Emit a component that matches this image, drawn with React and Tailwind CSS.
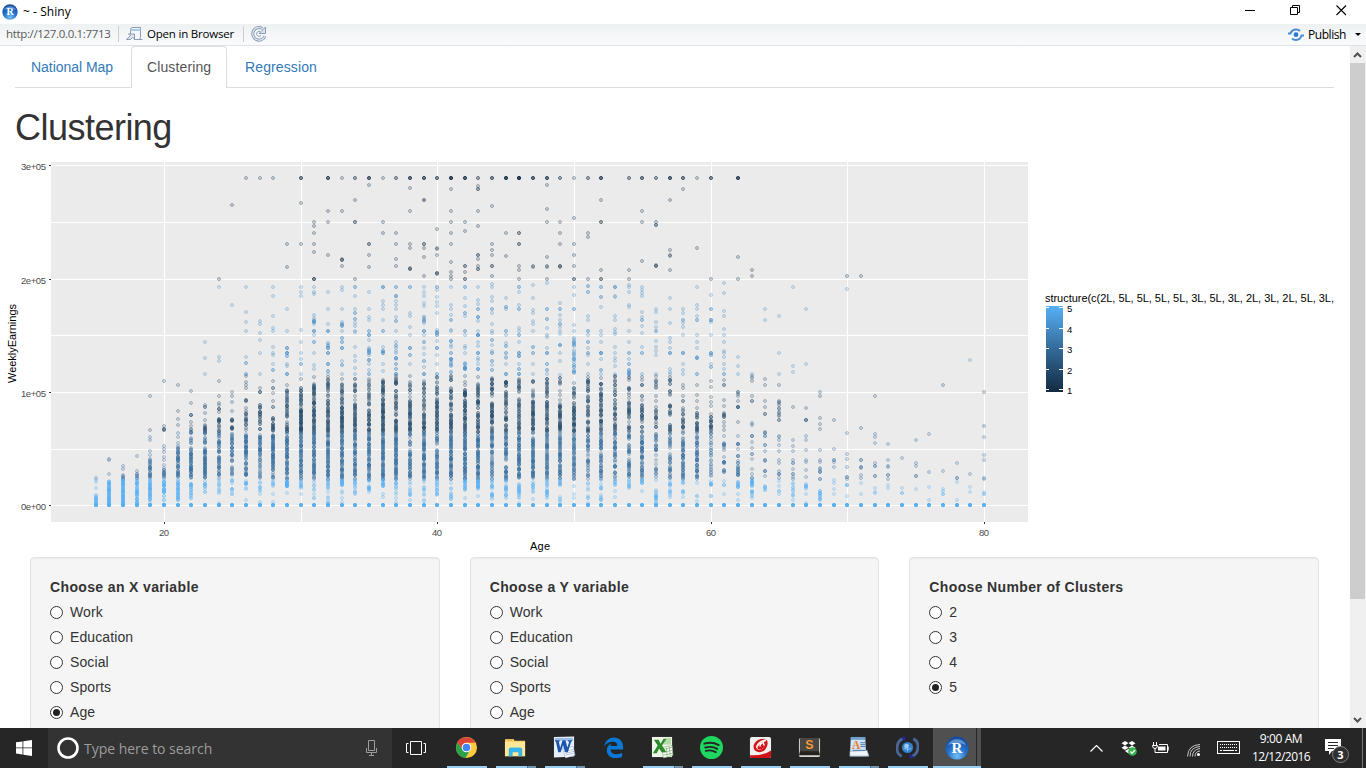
import React from "react";

const UI = "font-['Open_Sans','Noto_Sans',sans-serif]";

/* Scatter columns keyed by age. Tokens: "y", "yxCount" or "from-to@count". */
const COLUMNS = {
  15: "478 480 482 488 495-505@16",
  16: "459 460 474 481-505@50",
  17: "466 469 474-479@6 480-505@55",
  18: "456 471 474x2 476x2 478x2 480-505@38",
  19: "396 430 437 440 451 455 459-478@24 480-500@34 503",
  20: "381 426 429x2 430x2 446 449 452 457 460 465 468 470-478@12 480-492@22 492-505@8",
  21: "385 411 419 425 433 437 443 446 448-478@40 480-500@30",
  22: "391 403 415x3 422 426 428-443@12 448-478@45 481-498@18",
  23: "342 358 374 405 407x2 413 420 425-433@14 434-448@10 449-478@50 480-493@11",
  24: "279 287 357 361 381 396 403 405 409x3 412 419-422@9 425-433@8 434-478@48 480-495@9 503",
  25: "305 205 392 396 402 411 419-421@6 426-429@7 434-455@26 455-479@15 480-494@10",
  26: "178 287 312 322 331 357 363x2 374x2 376 382 385 388 400-402@4 408 413 411-430@16 434-453@32 453-478@26 480-490@9 500",
  27: "178 321 324 333 340 353 374 388 392x3 405-424@22 429x3 435-455@28 455-479@18 481-494@8 502 505",
  28: "178 287 296 316 328 331 347 353 355 364 370x2 381 388x2 393 401 407x2 415-420@5 424-432@14 434-470@60 472-486@12 494 502",
  29: "244 267 309 331 348x3 353x4 356x2 364 366 374x3 385 390-418@34 422-425@3 427-433@12 434-470@60 472-479@10 481-487@20 493",
  30: "178x3 203 244 287 292 296 330 342 353 359 364x2 374 379 388-407@26 409-425@40 426-433@20 434-479@75 481-488@9 494",
  31: "222 226 233 244 252 279x3 287 292 294 315 318-324@8 331x3 335 342x2 353 365 369 377 384-396@22 398-430@52 430-479@80 482-500@8",
  32: "178x4 211 222 255 292 309 324 331x3 342-346@4 348x3 353x3 364x3 371x2 374 377 379-396@20 400-430@44 430-479@80 480-488@10 492-503@6",
  33: "178 211 259 260x2 266 287 290 309 322-326@6 331 338x2 342x2 348x3 361 365x2 374 379 384-404@24 406-430@48 430-479@80 480-486@14 491 493 498 502",
  34: "178x2 200 222x2 279 287x2 296 309 313x2 319x2 323 326 332 331 347 356 361 368 374 379-389@9 391x4 396 400 403-430@42 430-479@72 480-494@12",
  35: "178x4 185 244x2 255 267 292 309 317 320 331x2 335x3 340 348-360@12 364 370 374x2 379-390@9 392-405@14 410-433@36 434-479@70 480-494@12",
  36: "178 222 233 287x3 301 305 309 320 331x2 347 351x3 353x3 364 371 380-396@26 399-433@65 434-479@80 480-487@12 494 497",
  37: "178x2 233 244 259 266 287x2 296x3 301 305 309 317 321x2 331 342-358@9 359 364x2 369x2 374x3 376-386@14 391x3 394-415@24 420-433@24 434-479@78 480-494@10 498 502",
  38: "178x4 188 211 244 248 268 269x2 287x2 313 316 327 335 348x3 355x2 364 376 382-390@9 393 397 401-433@55 434-445@12 450-479@44 481-500@10",
  39: "178x4 200x2 244x2 248 257 276 287 292 296 303 306 317-323@7 331x3 335 342x2 348 354 361x2 367 374x3 380-410@28 413-433@34 434-479@75 480-501@10",
  40: "178x3 229 248 249 255 273x2 274 287x2 290 297 302 306 313 330-335@7 341 348x3 355 364 374x2 377-400@18 400-433@55 434-444@12 450-479@45 480-495@15",
  41: "178x6 189 211 222 233 244 262 272 276 279 287 305 309 315 320x2 330 331 341x3 345 347 353x2 359x2 359-366@8 372x2 376-381@6 388-410@25 413-433@35 434-479@78 483-501@10",
  42: "178x5 222 231 266x2 272 279x2 287x2 298 306 313x2 316 331x2 335 346 348 353 363-371@10 376 382 385 390-397@18 400-433@55 434-479@80 480-490@15 498",
  43: "178x2 186 189x2 211 226 255x2 259 266 269x2 287 300 304 309x2 317x3 321 331 335x5 342 346 353x3 358 360 364 369x3 377 384-408@32 413-432@30 434-480@75 480-489@18 496",
  44: "178x3 206 244 250 255 266x2 276 284 287 297 301 309x2 313 324 331 333 340x2 345 351 353x2 361x2 365 370x2 378-396@24 403-423@40 427-454@40 456-479@25 480-500@17",
  45: "178x6 233 256 298 307x2 309 331x2 335 343 346x2 353x2 357 358 364 374x3 381-386@12 389-413@25 415-421@10 425-433@12 434-460@40 467-482@25 483-499@14",
  46: "178x8 233x2 244x2 266 270 279 287x2 292 305 309x2 328 331 335x2 342 353x3 356x3 364 369x2 374x3 378-392@16 399-418@24 420-432@18 434-479@75 484-498@17 503",
  47: "178x4 266 267 285 298 310 313 321 324 331 347x2 353x2 364 374 381x2 382x2 390-397@6 400-433@55 438-479@72 480-499@10",
  48: "178x4 185 209 222 257 266 267 279 283 309x2 319x2 328 335 337 348 353x3 364x2 370x2 374 378-397@22 400-433@45 434-479@66 480-498@17",
  49: "178x2 222 233 244 266x2 267 303 309x2 315 320 324x2 327 331 334 345x3 353 361 375 378-384@6 391 395 400 404-433@50 434-479@66 480-485@8 490-502@4",
  50: "178 218 244 255 266 279x2 287 295 309x2 325 331 338-346@9 350-374@19 383 387-398@12 403-433@50 434-479@62 486 494 498",
  51: "178x2 233 237 279 286x2 292x2 316 320 331x2 335 342x2 348 353x2 355 364 374 377-391@18 396-402@9 405-423@20 427-451@32 454-479@22 482-498@7 503",
  52: "178x4 200 222x2 270 279x2 287x2 297x2 307 331 335 342 353x4 359 370x2 374 378 384x5 388-433@58 434-450@25 452-479@32 480-500@12",
  53: "287x3 296 297 316 320 329 332 334 347 353 358 361 366 374 376-392@15 395x3 400-430@32 430-457@38 460-479@18 481-485@6 491 497",
  54: "178x2 270 279 285 287 292 305 307 320 331 342 353x2 359 364x2 370-375@8 377-398@12 402-418@24 422-441@20 445-455@13 459-477@25 480-488@9",
  55: "178x3 211 222 261 287 290 293 296 312 317 320x2 326 333 347 353x2 374 377 380 385x3 396x2 400 405-420@23 422-434@8 436-460@38 462-479@22 480-483@7 491",
  56: "178x2 222 225x2 265 266x2 309 312 322 327 331x2 341 347 351 355 374 376 380-388@8 396 401 407 410-427@18 433-455@23 460 464 468-480@10 489-503@14",
  57: "178x4 200 250 255 256 270 298 309 323 338 342 348 353x3 369 372 374 377-386@8 391-396@5 405-415@14 425-433@12 434-448@15 454-479@26 480-497@12",
  58: "178x3 189 309 313 320x2 323 327 335 353x3 364 370 374 385 388 396 401x2 408 410-433@24 438-479@58 480-483@4 491-498@5",
  59: "178 248 287 305 309 316 320x2 335 342 348 357 358x3 374x2 385 395 401 408 412-418@8 423-433@18 436-455@24 455-479@32 483 496x2 501",
  60: "178x3 279 295 309x2 320x3 322 335 353x3 355x2 364 367x2 381 387 397 402 406 414-434@27 437-479@28 481-488@7 496x2",
  61: "283 293 311 316 329 335 342 351 353 357 364 369 374x2 380 385x2 400 406 413-417@8 422 426 430 436 442-450@9 457 462x4 463-475@8 481 485x2 494",
  62: "178x5 257 279 357 366 374 392x2 394 396 401 407x4 422 436 444x4 449 456-479@22 482-488@10 494 500",
  63: "270 276 374 376 378 381 396 401x2 423 425 436x3 442 448 454x2 459 469 474 478x2 480-486@13 491-498@8",
  64: "309 320 379 385 401 407 414x2 431-433@3 436x2 445x2 451 460x2 461 471x3 476 484-490@6",
  65: "316 353 374 385 400-420@13 436 437 440 445 451 460 463 471 474x3 478 481 486 491x2 494",
  66: "287 366 372 407 440 446 451 460 463-479@8 483-500@10",
  67: "309 364 408 420x3 436 440 450 460 462 470 477 484-490@7 494 503",
  68: "392 396 418 424 429 450 460 462 467-472@5 479x2 491-500@12",
  69: "420 449 460x2 462 467 480 483 489 494",
  70: "276 289 433 454 459 467 477x2 479 485x3 496",
  71: "276 428 460x2 467x2 468 475 478 483 494",
  72: "396 434 437 443 463 466x2 476x2 488 492 493",
  73: "444 460 466 467 475x2 479 485 488",
  74: "458 488 493x2",
  75: "440 463 466 476x2 489",
  76: "434 472 487 500",
  77: "385 471 489 491 494x2",
  78: "463 478x2 482 500",
  79: "360 474 487 492",
  80: "392 426 437 455 460 478 479 492 494x2",
};

function clusterColor(y) {
  if (y < 283) return "#132b43";
  if (y < 376) return "#458ec9";
  if (y < 433) return "#234b6e";
  if (y < 480) return "#346e9f";
  return "#56b1f7";
}

function buildPoints() {
  let seed = 4242;
  const rand = () => {
    seed = (seed * 1664525 + 1013904223) % 4294967296;
    return seed / 4294967296;
  };
  const points = [];
  for (const [age, spec] of Object.entries(COLUMNS)) {
    const x = Math.round(164 + (Number(age) - 20) * 13.667);
    for (const token of spec.split(" ")) {
      const range = token.match(/^(\d+)-(\d+)@(\d+)$/);
      if (range) {
        const from = Number(range[1]);
        const to = Number(range[2]);
        const thin = Number(age) > 28 && from > 375 && from < 480 ? 0.85 : 1;
        const n = Math.ceil(Number(range[3]) * thin);
        for (let i = 0; i < n; i++) {
          const spot = (i + rand() * 6 - 2.5) / n;
          points.push([x, Math.round(from + Math.min(1, Math.max(0, spot)) * (to - from))]);
        }
      } else {
        const [y, n] = token.split("x");
        for (let i = 0; i < Number(n || 1); i++) points.push([x, Number(y)]);
      }
    }
    for (let i = 0; i < 10; i++) points.push([x, 505]);
  }
  return points;
}

const POINTS = buildPoints();

function Plot() {
  return (
    <svg
      className="block h-[395px] w-[1334px] shrink-0 font-['Liberation_Sans',Arial,sans-serif]"
      viewBox="0 162 1334 395"
    >
      <rect x="51" y="162" width="977" height="360" fill="#ebebeb" />
      <g fill="#fff">
        {[165, 222, 279, 335, 392, 449, 505].map((y) => (
          <rect key={y} x="51" y={y} width="977" height="1" />
        ))}
        {[164, 301, 437, 574, 711, 847, 984].map((x) => (
          <rect key={x} x={x} y="162" width="1" height="360" />
        ))}
      </g>
      <g strokeWidth="1">
        {POINTS.map(([x, y], i) => {
          const c = clusterColor(y);
          return <circle key={i} cx={x} cy={y} r="1.5" fill={c} stroke={c} fillOpacity="0.13" strokeOpacity="0.33" />;
        })}
      </g>
      <g fill="#333">
        {[165, 279, 392, 505].map((y) => (
          <rect key={y} x="49" y={y} width="2" height="1" />
        ))}
        {[164, 437, 711, 984].map((x) => (
          <rect key={x} x={x} y="522" width="1" height="2" />
        ))}
      </g>
      <g fill="#4d4d4d" fontSize="9.5" textAnchor="end">
        <text x="46" y="170" textLength="25">3e+05</text>
        <text x="46" y="284" textLength="25">2e+05</text>
        <text x="46" y="397" textLength="25">1e+05</text>
        <text x="46" y="510" textLength="25">0e+00</text>
      </g>
      <g fill="#4d4d4d" fontSize="9.5" textAnchor="middle">
        <text x="164" y="536" textLength="10">20</text>
        <text x="437" y="536" textLength="10">40</text>
        <text x="711" y="536" textLength="10">60</text>
        <text x="984" y="536" textLength="10">80</text>
      </g>
      <g fill="#000" fontSize="11">
        <text x="530" y="550" textLength="20">Age</text>
        <text transform="translate(15.5 383) rotate(-90)" textLength="79">WeeklyEarnings</text>
        <text x="1045" y="302" textLength="289">structure(c(2L, 5L, 5L, 5L, 5L, 3L, 5L, 3L, 2L, 3L, 2L, 5L, 3L,</text>
      </g>
      <defs>
        <linearGradient id="bar" x1="0" y1="0" x2="0" y2="1">
          <stop offset="0" stopColor="#56b1f7" />
          <stop offset="0.5" stopColor="#346a98" />
          <stop offset="1" stopColor="#132b43" />
        </linearGradient>
      </defs>
      <rect x="1046" y="306" width="17" height="86" fill="url(#bar)" />
      {[307, 328, 348, 369, 389].map((y, i) => (
        <g key={y}>
          <rect x="1046" y={y} width="3" height="1" fill="#fff" />
          <rect x="1059" y={y} width="4" height="1" fill="#fff" />
          <text x="1067" y={y + 5} fontSize="9.5" fill="#000">
            {5 - i}
          </text>
        </g>
      ))}
    </svg>
  );
}

function Radio({ label, checked }) {
  return (
    <div className="flex h-[25px] items-center gap-[7px] text-[14px] leading-5 tracking-[0.1px]">
      <span className="flex h-[13px] w-[13px] items-center justify-center rounded-full border border-[#333] bg-white">
        {checked && <span className="h-[7px] w-[7px] rounded-full bg-[#222]" />}
      </span>
      <span className="pb-[2px]">{label}</span>
    </div>
  );
}

function Well({ title, options, selected }) {
  return (
    <div className="h-[300px] flex-1 rounded-[4px] border border-[#e3e3e3] bg-[#f5f5f5] pt-[19px] pl-[19px] shadow-[inset_0_1px_1px_rgba(0,0,0,0.05)]">
      <div className="mb-[3px] text-[14px] leading-5 font-bold tracking-[0.36px]">{title}</div>
      {options.map((o) => (
        <Radio key={o} label={o} checked={o === selected} />
      ))}
    </div>
  );
}

function RLogo({ className }) {
  return (
    <svg className={className} viewBox="0 0 24 24">
      <defs>
        <radialGradient id="rball" cx="0.5" cy="0.85" r="0.8">
          <stop offset="0" stopColor="#73c0f5" />
          <stop offset="0.5" stopColor="#2573cb" />
          <stop offset="1" stopColor="#174a9c" />
        </radialGradient>
      </defs>
      <circle cx="12" cy="12" r="11.5" fill="url(#rball)" />
      <path d="M3 9a10 10 0 0 1 18 0q-9-4-18 0z" fill="#8bb9e8" opacity="0.6" />
      <text x="12" y="17" fontSize="15" fontWeight="bold" textAnchor="middle" fill="#fff" fontFamily="Liberation Serif, serif">
        R
      </text>
    </svg>
  );
}

function WindowBars() {
  return (
    <>
      <header className={`flex h-6 shrink-0 items-center bg-white text-[12px] text-black ${UI}`}>
        <RLogo className="ml-[2px] h-4 w-4" />
        <span className="ml-[5px] tracking-[0.05px]">~ - Shiny</span>
        <svg className="ml-auto h-6 w-[121px]" viewBox="0 0 121 24" fill="none" stroke="#000">
          <path d="M0 10.5h10M45.500 7.500h7v7h-7zM47.500 7.500v-2h7v7h-2" />
          <path d="M91.500 5.500l9.500 9.500M101 5.500L91.500 15" strokeWidth="1.1" />
        </svg>
      </header>
      <div className={`flex h-[22px] shrink-0 items-center border-b border-[#dfe3e6] bg-linear-to-b from-[#eef1f2] to-[#fafbfc] pb-px text-[12px] leading-none text-black ${UI}`}>
        <span className="ml-[6px] w-[105px] text-[11.5px] whitespace-nowrap text-[#5b5b5b] tracking-[-0.34px]">http://127.0.0.1:7713</span>
        <span className="ml-[7px] h-4 w-px bg-[#c9ced2]" />
        <svg className="ml-[7px] h-[14px] w-[18px]" viewBox="0 0 18 14" fill="none" stroke="#8b9bb5">
          <path d="M4.500 7V2.500q0-2 2-2h8v10q0 2-2 2h4" fill="#f3f7fc" />
          <path d="M4.500 3h10" stroke="#a9cbe8" strokeWidth="2" />
          <path d="M0.500 12.500l4-4-2-1.500h6v5l-2-1.500-2 2z" fill="#dbe3ef" />
          <path d="M8 12.500h5" />
        </svg>
        <span className="ml-[3px] w-[87px] text-[11.500px] font-medium whitespace-nowrap tracking-[-0.2px]">Open in Browser</span>
        <span className="ml-[9px] h-4 w-px bg-[#c9ced2]" />
        <svg className="ml-[7px] h-4 w-4" viewBox="0 0 16 16" fill="none">
          <path d="M11.500 2.500A6.300 6.300 0 1 0 14 10" stroke="#8a9ab5" strokeWidth="3" />
          <path d="M11.500 2.500A6.300 6.300 0 1 0 14 10" stroke="#e1e8f1" strokeWidth="1.200" />
          <path d="M14.500 1v6.500h-6.500l2.500-2.200z" fill="#dce4ef" stroke="#8a9ab5" />
          <path d="M10 9.500a2.500 2.500 0 1 1-1-4" stroke="#8a9ab5" />
        </svg>
        <svg className="mt-px ml-auto h-[14px] w-4" viewBox="0 0 16 14" fill="none" stroke="#4b8bd0" strokeWidth="2">
          <path d="M0 5.500h2.500q1.500-4 5.500-4 2.500 0 4 1.500M16 7.500h-2.500q-1.500 4.500-5.500 4.500-2.500 0-4-1.500" />
          <circle cx="8" cy="6.700" r="2.400" fill="#2878d8" stroke="none" />
        </svg>
        <span className="mt-px ml-1 w-[38px] text-[12px] whitespace-nowrap tracking-[-0.450px]">Publish</span>
        <svg className="mt-px mr-[5px] ml-[9px] h-[3px] w-[6px]" viewBox="0 0 6 3">
          <path d="M0 0h6L3 3z" />
        </svg>
      </div>
    </>
  );
}

function Scrollbar() {
  return (
    <div className="flex w-4 shrink-0 flex-col items-center bg-[#f0f0f0]">
      <svg className="h-[17px] w-4" viewBox="0 0 16 17" fill="none" stroke="#505050" strokeWidth="2">
        <path d="M4 11l3.500-3.500L11 11" />
      </svg>
      <div className="mr-px h-[536px] w-[15px] bg-[#cdcdcd]" />
      <svg className="mt-auto h-[17px] w-4" viewBox="0 0 16 17" fill="none" stroke="#505050" strokeWidth="2">
        <path d="M4 7l3.500 3.500L11 7" />
      </svg>
    </div>
  );
}

const ICONS = {
  chrome: (
    <>
      <circle cx="12" cy="12" r="11" fill="#fbcb3c" />
      <path d="M2.500 6.500A11 11 0 0 0 11 23l5-9-8 0z" fill="#2ba24c" />
      <path d="M2.500 6.500L8 14l4-7h9.600A11 11 0 0 0 2.500 6.500z" fill="#db4437" />
      <circle cx="12" cy="12" r="5" fill="#fff" />
      <circle cx="12" cy="12" r="4" fill="#4285f4" />
    </>
  ),
  explorer: (
    <>
      <path d="M2 3h8l1 2h11v16H1V4z" fill="#f4d06b" />
      <path d="M1 6h21v15H1z" fill="#ffe795" />
      <path d="M3 4h6" stroke="#e8a33a" />
      <path d="M5 21v-8l2-1h10l2 1v8h-4v-4h-6v4z" fill="#39b5ea" />
    </>
  ),
  word: (
    <>
      <path d="M1 1l21-0.500v21L1 22.500z" fill="#e7effa" />
      <path d="M2 2h19v3H2z" fill="#9ebde2" />
      <path d="M10 13l11-2 2 9-10 3z" fill="#fff" stroke="#8aa3cc" strokeWidth="0.600" />
      <path d="M12 16l9-2M13 18l9-2M13 20l9-2" stroke="#8aa3cc" strokeWidth="0.700" />
      <path d="M2 4.500h5v1.300H6l1.500 6.500L10 4.500h3l2 7.500 2-6.200h-1.500V4.500H20v1.300h-1L15.500 17h-3L10.500 9.500 8 17H5.500L3 5.800H2z" fill="#1c55ad" />
    </>
  ),
  edge: (
    <path d="M2 11C3.500 4.500 8 1.500 12.500 1.500 18 1.500 22 5.500 22 11v3H9c0 3.500 3 5 6.500 5 2 0 4-.6 5.500-1.400v4C19 22.700 16.800 23 14.500 23 8.500 23 5 19.500 5 15c0-3.500 2-6 5-7.500-.8 1-1.200 2-1.200 3H16c0-2.800-1.500-4.400-4.500-4.400C7.500 6.100 4 8 2 11z" fill="#0a78d6" />
  ),
  excel: (
    <>
      <path d="M1 1h21v21H1z" fill="#edf6e8" />
      <path d="M13 2h8v7h-8z" fill="#b9dba8" />
      <path d="M11 12l11-2 1 10-10 3z" fill="#fff" stroke="#76a86a" strokeWidth="0.600" />
      <path d="M12 14l10-2M12 17l10-2M13 20l10-2M16 12l1 9M19 11l1 9" stroke="#76a86a" strokeWidth="0.700" />
      <path d="M3 4h5l2 4 3-5h3l-4.500 7L16 17h-5l-2.500-4L6 18H2l5-8z" fill="#2a8a2c" />
    </>
  ),
  spotify: (
    <>
      <circle cx="12" cy="12" r="12" fill="#1ed760" />
      <path d="M4.500 8q8-2.300 15 1.500M5.500 12q7-1.800 12.500 1.400M6 15.500q6-1.400 10.500 1.300" fill="none" stroke="#262626" strokeWidth="2" strokeLinecap="round" />
    </>
  ),
  trend: (
    <>
      <rect x="1" y="1" width="22" height="22" rx="2" fill="#f3f1ef" />
      <path d="M1 20q13 1 22-5v6q0 2-2 2H3q-2 0-2-2z" fill="#d01217" />
      <path d="M18 3Q9 2 5.500 8 3.500 12 6.500 15.500 12 19 17 14q4-5 1.500-10-1 2-3 2.500l1 3q-2 5-6.500 5-3-1-2.500-4Q9 5 18 3z" fill="#d5141b" />
      <path d="M8 12q1-5 6-5.500 0 3 2 4-2 4-6 3.500z" fill="#d5141b" />
      <path d="M8 12.500q1.500-5 6-5.500-3 2-2.500 4" fill="none" stroke="#fff" strokeWidth="1.300" />
    </>
  ),
  sublime: (
    <>
      <rect x="1" y="2" width="22" height="20" rx="2" fill="#d8d8d6" />
      <rect x="2" y="2" width="20" height="16" rx="1" fill="#494744" />
      <path d="M2 16h20l1 4H1z" fill="#26231f" />
      <text x="12" y="13.500" fontSize="13" fontWeight="bold" textAnchor="middle" fill="#f39a35" fontFamily="Liberation Sans, sans-serif">S</text>
    </>
  ),
  wordpad: (
    <>
      <path d="M4 1h15l1 20H3z" fill="#cfe3f5" />
      <path d="M4 1h15v3H4z" fill="#6ea0ca" />
      <path d="M3 16l18-1 2 6H3z" fill="#eef4f8" stroke="#8198ad" strokeWidth="0.600" />
      <path d="M14 7h5M14 9h5M14 11h5M6 15h13" stroke="#4d7ba8" />
      <text x="9.500" y="13.500" fontSize="12" fontWeight="bold" textAnchor="middle" fill="#ee7b1c" fontFamily="Liberation Serif, serif">A</text>
    </>
  ),
  sync: (
    <>
      <circle cx="12" cy="12" r="5.800" fill="#3482cf" />
      <circle cx="11" cy="10.500" r="2.500" fill="#9ad0f5" />
      <path d="M8 13l4 1 4-1M12 12v4" stroke="#8cc8f2" fill="none" />
      <path d="M9 2C-1 5-1 18 6 21" fill="none" stroke="#4a6596" strokeWidth="3" />
      <path d="M15 22C25 19 25 6 18 3" fill="none" stroke="#4a6596" strokeWidth="3" />
      <path d="M4 1h6v5zM20 23h-6v-5z" fill="#27248c" />
    </>
  ),
};

function TaskButton({ name, running = true, multi }) {
  return (
    <div className="flex h-10 w-[49px] shrink-0 flex-col items-center">
      <svg className="mt-2 mr-[2px] h-[23px] w-[23px]" viewBox="0 0 24 24">
        {ICONS[name]}
      </svg>
      {running && (
        <div className="mt-auto mr-px flex h-[2px] w-10 bg-[#98cdf5]">
          {multi && <span className="ml-auto w-[9px] border-l border-[#4f6c82] bg-[#7095b0]" />}
        </div>
      )}
    </div>
  );
}

function Taskbar() {
  return (
    <footer className={`flex h-10 shrink-0 bg-[#262626] text-white ${UI}`}>
      <div className="flex w-12 items-center justify-center">
        <svg className="h-4 w-4" viewBox="0 0 16 16" fill="#fff">
          <path d="M0 2.300l6.500-.9v6.100H0zM7.300 1.300L16 0v7.500H7.300zM0 8.300h6.500v6.200L0 13.600zM7.300 8.300H16V16l-8.700-1.300z" />
        </svg>
      </div>
      <div className="flex w-[344px] items-center bg-[#333]">
        <svg className="ml-2 h-6 w-6" viewBox="0 0 24 24">
          <circle cx="12" cy="12" r="9.500" fill="none" stroke="#fff" strokeWidth="2.600" />
        </svg>
        <span className="ml-1 text-[14px] tracking-[-0.03px] text-[#9c9c9c]">Type here to search</span>
        <svg className="mr-[15px] ml-auto h-4 w-[11px]" viewBox="0 0 11 16" fill="none" stroke="#9d9d9d">
          <path d="M2.500 0.500h6v10h-6zM0.500 8v4.500h10V8M5.500 13v2.500M3 15.500h5" />
        </svg>
      </div>
      <div className="flex w-[51px] items-center pl-[14px]">
        <svg className="h-[14px] w-5" viewBox="0 0 20 14" fill="none" stroke="#fff">
          <path d="M4.500 0.500h11v13h-11zM2.500 2.500h-2v9h2M17.500 2.500h2v9h-2" />
        </svg>
      </div>
      <TaskButton name="chrome" />
      <TaskButton name="explorer" multi />
      <TaskButton name="word" multi />
      <TaskButton name="edge" running={false} />
      <TaskButton name="excel" multi />
      <TaskButton name="spotify" />
      <TaskButton name="trend" />
      <TaskButton name="sublime" />
      <TaskButton name="wordpad" multi />
      <TaskButton name="sync" />
      <div className="flex h-10 w-12 shrink-0 border-b-2 border-[#98cdf5] bg-[#505050]">
        <div className="flex w-11 justify-center border-r border-[#262626] pt-2 pl-1">
          <RLogo className="h-6 w-6" />
        </div>
      </div>
      <div className="ml-auto flex h-10 items-center">
        <svg className="h-[7px] w-[13px]" viewBox="0 0 13 7" fill="none" stroke="#fff" strokeWidth="1.200">
          <path d="M0.500 6.500l6-6 6 6" />
        </svg>
        <svg className="ml-[18px] h-4 w-4" viewBox="0 0 16 16">
          <path d="M4 1l3.500 2L4 5.500.5 3.200zM11 1l3.500 2.200L11 5.500 7.500 3zM.5 7.700L4 5.500l3.500 2.300L4 10zM11 5.500l3.500 2.200L11 10 7.500 7.800zM4 11l3.500-2.300L11 11l-3.500 2.500z" fill="#fff" />
          <circle cx="11.500" cy="11.500" r="4.300" fill="#35b34a" />
          <path d="M9.500 11.500l1.500 1.700 3-3.200" stroke="#fff" fill="none" strokeWidth="1.300" />
        </svg>
        <svg className="ml-[15px] h-4 w-[17px]" viewBox="0 0 17 16" fill="none" stroke="#fff">
          <path d="M1.500 2v3M4.500 2v3M0.500 5.500h5q0 3-2.500 3t-2.500-3M3 8v4.500h12.500v-8H7" />
          <path d="M16 6.500v4" strokeWidth="1.500" />
          <path d="M6 6.500h7.500v4H6z" fill="#fff" stroke="none" />
        </svg>
        <svg className="mt-1 ml-[18px] h-[13px] w-[14px]" viewBox="0 0 14 13" fill="none" stroke="#d9d9d9">
          <circle cx="11.500" cy="10.500" r="1.500" fill="#fff" stroke="none" />
          <path d="M8 12.500q0-5 5-5.500M5.500 12.500q0-7 7.500-8M3 12.500Q3 3 13 2.500M0.500 12.500Q1 1 13 .5" strokeWidth="0.900" />
        </svg>
        <svg className="ml-4 h-[14px] w-[23px]" viewBox="0 0 23 14" fill="none" stroke="#fff">
          <rect x="0.500" y="0.500" width="22" height="12" />
          <path d="M3 3.500h17M3 6.500h17" strokeDasharray="1 1" />
          <path d="M3 9.500h2M6 9.500h11M18 9.500h2" />
        </svg>
        <div className="ml-[8px] flex w-[66px] flex-col items-center text-[12px] leading-[18px] tracking-[-0.400px] whitespace-nowrap">
          <span>9:00 AM</span>
          <span className="tracking-[-0.550px]">12/12/2016</span>
        </div>
        <svg className="mt-1 mr-px ml-[11px] h-[26px] w-6" viewBox="0 0 24 26">
          <path d="M0 2h16v12H7l-3 4v-4H0z" fill="#fff" />
          <path d="M3 5.500h10M3 8.500h10M3 11.500h6" stroke="#262626" />
          <circle cx="15.500" cy="17.500" r="8" fill="#303030" stroke="#828282" />
          <text x="15.500" y="21.500" fontSize="11" fontWeight="bold" textAnchor="middle" fill="#fff">3</text>
        </svg>
        <span className="mr-[3px] ml-[12px] h-10 w-px bg-[#777]" />
      </div>
    </footer>
  );
}

export default function App() {
  return (
    <div className="flex h-[768px] w-[1366px] flex-col overflow-hidden bg-white font-['Liberation_Sans',Arial,sans-serif] text-[#333]">
      <WindowBars />
      <div className="flex min-h-0 flex-1">
        <main className="flex w-[1350px] flex-col overflow-hidden">
          <nav className="mr-4 ml-[15px] flex h-[42px] shrink-0 border-b border-[#ddd] text-[14px] leading-5 tracking-[0.120px] text-[#337ab7]">
            <a className="w-[116px] px-4 pt-[11px] tracking-[-0.040px]">National Map</a>
            <a className="h-[42px] w-24 rounded-t-[4px] border border-b-0 border-[#ddd] bg-white pt-[10px] pl-[15px] text-[#555]">Clustering</a>
            <a className="pt-[11px] pl-[18px]">Regression</a>
          </nav>
          <h1 className="mt-5 ml-[15px] h-[54px] shrink-0 text-[36px] leading-[40px] tracking-[-0.520px]">Clustering</h1>
          <Plot />
          <div className="flex shrink-0 gap-[30px] pr-[31px] pl-[30px]">
            <Well title="Choose an X variable" options={["Work", "Education", "Social", "Sports", "Age"]} selected="Age" />
            <Well title="Choose a Y variable" options={["Work", "Education", "Social", "Sports", "Age"]} />
            <Well title="Choose Number of Clusters" options={["2", "3", "4", "5"]} selected="5" />
          </div>
        </main>
        <Scrollbar />
      </div>
      <Taskbar />
    </div>
  );
}
